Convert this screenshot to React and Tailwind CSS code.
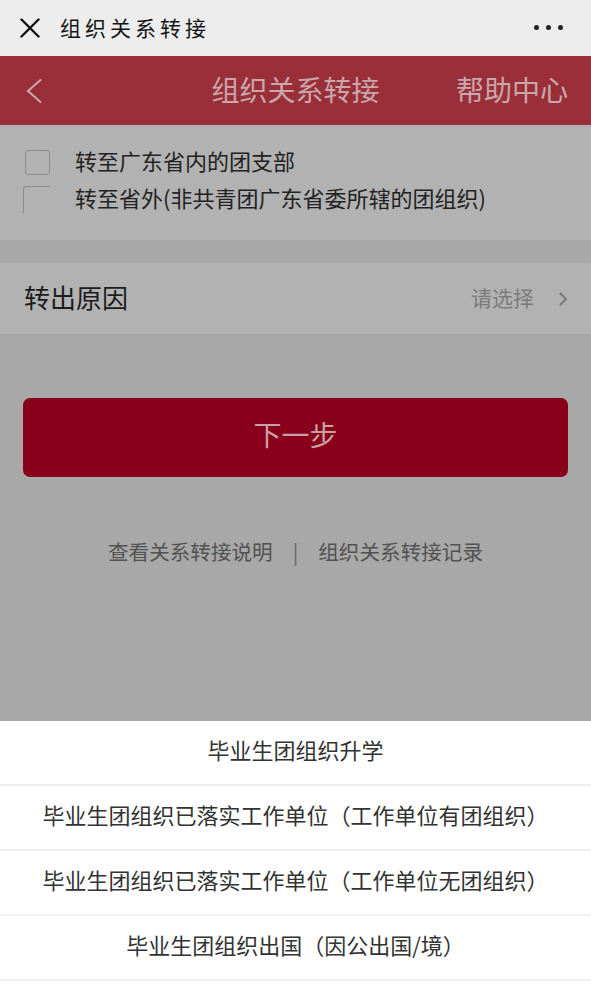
import { useState } from 'react';

const REASONS = [
  '毕业生团组织升学',
  '毕业生团组织已落实工作单位（工作单位有团组织）',
  '毕业生团组织已落实工作单位（工作单位无团组织）',
  '毕业生团组织出国（因公出国/境）',
];

const FONT = { fontFamily: '"Noto Sans CJK SC", "Noto Sans", sans-serif' };

function CheckRow({ checked, onToggle, label, partial }) {
  return (
    <button type="button" onClick={onToggle} className="flex h-[26px] w-full items-start text-left">
      {partial ? (
        <span className="ml-[23px] mt-[2px] h-[27px] w-[27px] shrink-0 rounded-tl-[3px] border-l border-t border-[#8c8c8c]" />
      ) : (
        <span className="ml-[25px] mt-[3px] h-[25px] w-[25px] shrink-0 rounded-[3px] border border-[#8c8c8c]" />
      )}
      <span className={`ml-[25px] text-[22px] leading-[26px] text-[#222] ${checked ? 'font-semibold' : ''}`}>
        {label}
      </span>
    </button>
  );
}

export default function App() {
  const [target, setTarget] = useState('');
  const [reason, setReason] = useState('');

  return (
    <div className="relative h-[998px] w-full overflow-hidden bg-[#a8a8a8]" style={FONT}>
      {/* wechat bar */}
      <div className="flex h-[56px] items-center bg-[#ededed] pl-[20px] pr-[28px]">
        <svg width="20" height="20" viewBox="0 0 20 20" className="shrink-0">
          <path d="M1.5 1.5l17 17M18.5 1.5l-17 17" stroke="#111" strokeWidth="2.4" strokeLinecap="round" />
        </svg>
        <span className="ml-[20px] text-[21px] tracking-[4px] text-[#141414]">组织关系转接</span>
        <div className="ml-auto flex gap-[7px] pb-[2px]">
          <span className="h-[5px] w-[5px] rounded-full bg-[#222]" />
          <span className="h-[5px] w-[5px] rounded-full bg-[#222]" />
          <span className="h-[5px] w-[5px] rounded-full bg-[#222]" />
        </div>
      </div>

      {/* header */}
      <div className="relative flex h-[69px] items-center bg-[#9a2f3a] px-[23px] text-[#c9a7ab]">
        <svg width="18" height="26" viewBox="0 0 18 26" className="ml-[2px] shrink-0">
          <path d="M16 1.5L3 13l13 11.5" fill="none" stroke="#c9a7ab" strokeWidth="2" />
        </svg>
        <h1 className="absolute left-1/2 -translate-x-1/2 pb-[4px] text-[28px] leading-none">组织关系转接</h1>
        <span className="ml-auto pb-[4px] text-[28px] leading-none">帮助中心</span>
      </div>

      {/* target options */}
      <div className="flex h-[115px] flex-col gap-[11px] bg-[#b2b2b2] pt-[22px]">
        <CheckRow
          checked={target === 'in'}
          onToggle={() => setTarget('in')}
          label="转至广东省内的团支部"
        />
        <CheckRow
          partial
          checked={target === 'out'}
          onToggle={() => setTarget('out')}
          label="转至省外(非共青团广东省委所辖的团组织)"
        />
      </div>

      <div className="h-[23px] bg-[#a9a9a9]" />

      {/* reason row */}
      <div className="flex h-[71px] items-center bg-[#b2b2b2] pl-[24px] pr-[23px]">
        <span className="pb-[4px] text-[26px] text-[#1c1c1c]">转出原因</span>
        <span className="ml-auto pb-[2px] text-[21px] text-[#7b7b7b]">{reason ? '已选择' : '请选择'}</span>
        <svg width="10" height="16" viewBox="0 0 10 16" className="ml-[24px] shrink-0">
          <path d="M2 2l6 6-6 6" fill="none" stroke="#7a7a7a" strokeWidth="2.2" />
        </svg>
      </div>

      {/* next button */}
      <div className="px-[23px] pt-[64px]">
        <button
          type="button"
          className="flex h-[79px] w-full items-center justify-center rounded-[7px] bg-[#880019] pb-[8px] text-[28px] text-[#c89fa7]"
        >
          下一步
        </button>
      </div>

      {/* links */}
      <div className="mt-[60px] flex items-center justify-center text-[20.6px] leading-[28px] text-[#525252]">
        <span>查看关系转接说明</span>
        <span className="mx-[20px] text-[#666]">|</span>
        <span>组织关系转接记录</span>
      </div>

      {/* action sheet */}
      <div className="absolute bottom-0 left-0 right-0 top-[721px] bg-white">
        {REASONS.map((item) => (
          <button
            key={item}
            type="button"
            onClick={() => setReason(item)}
            className="flex h-[65px] w-full items-center justify-center border-b-2 border-[#f0f0f0] pb-[6px] text-[22px] text-[#333]"
          >
            {item}
          </button>
        ))}
      </div>
    </div>
  );
}
